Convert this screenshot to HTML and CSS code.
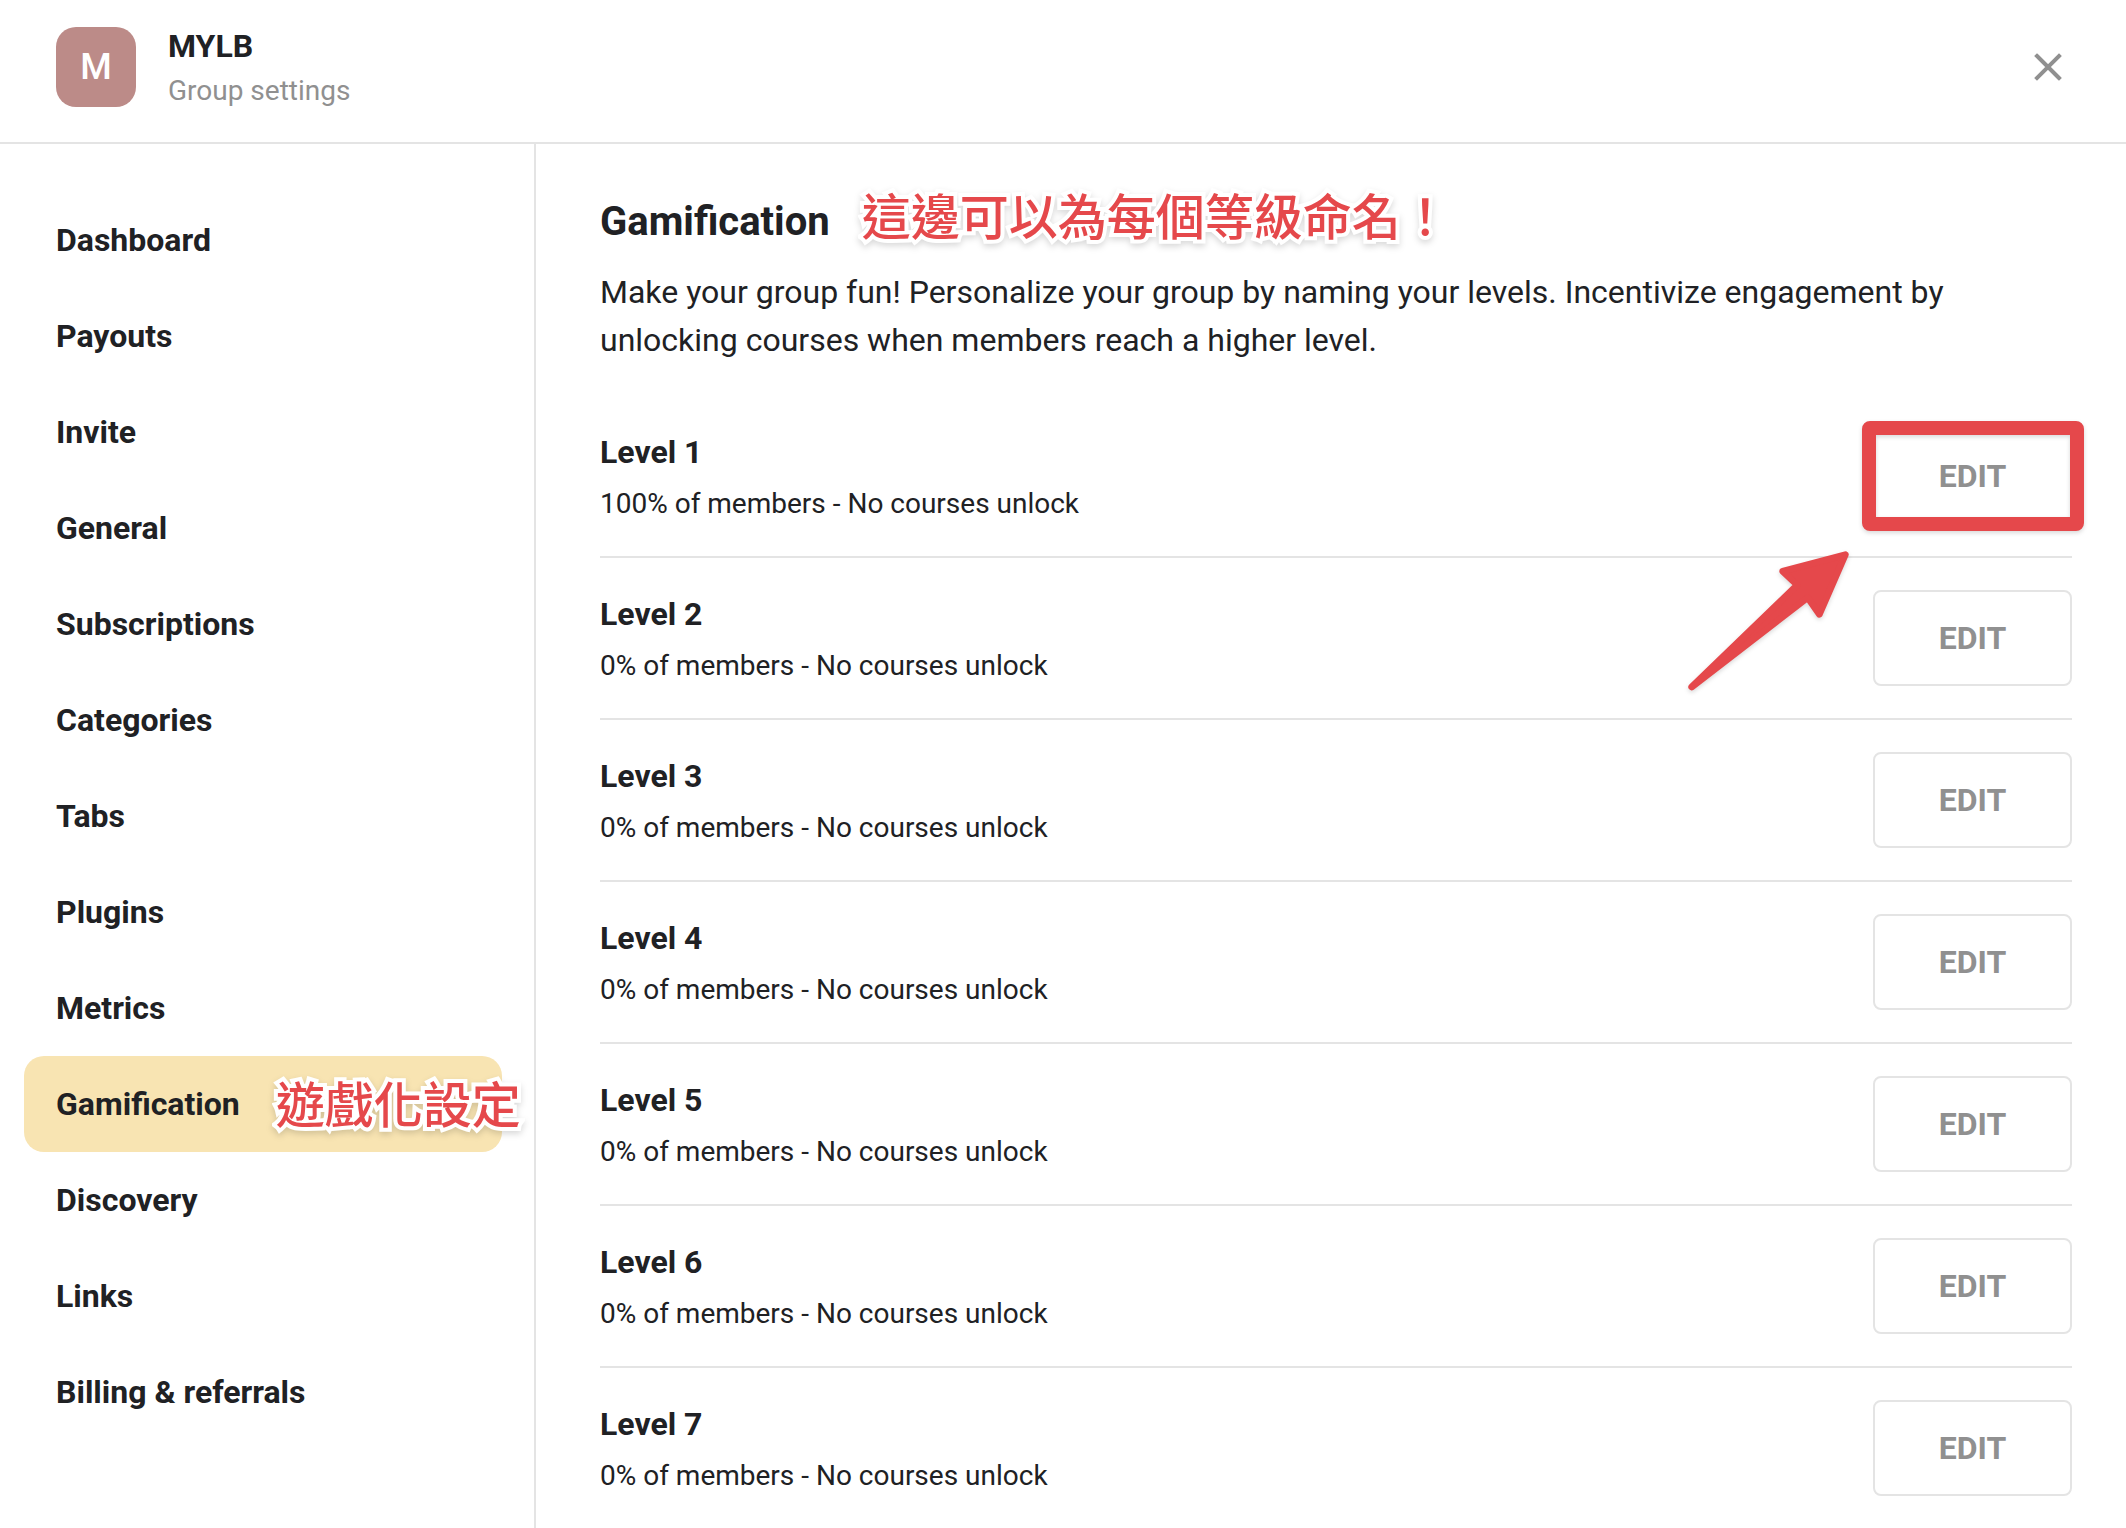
FILE: index.html
```html
<!DOCTYPE html>
<html lang="en">
    <head>
        <meta charset="utf-8">
        <title>Group settings</title>
        <link rel="stylesheet" href="styles.css">
    </head>
    <body>
        <header class="header">
            <div class="avatar">M</div>
            <div class="group">
                <div class="group_name">MYLB</div>
                <div class="group_sub">Group settings</div>
            </div>
            <button class="close" aria-label="Close">
                <svg viewBox="0 0 48 48" width="48" height="48">
                    <path d="M13 13L35 35M35 13L13 35"/>
                </svg>
            </button>
        </header>
        <div class="content">
            <nav class="sidebar">
                <a class="item" href="#">Dashboard</a>
                <a class="item" href="#">Payouts</a>
                <a class="item" href="#">Invite</a>
                <a class="item" href="#">General</a>
                <a class="item" href="#">Subscriptions</a>
                <a class="item" href="#">Categories</a>
                <a class="item" href="#">Tabs</a>
                <a class="item" href="#">Plugins</a>
                <a class="item" href="#">Metrics</a>
                <a class="item selected" href="#">Gamification <span class="note" lang="zh-Hant">遊戲化設定</span></a>
                <a class="item" href="#">Discovery</a>
                <a class="item" href="#">Links</a>
                <a class="item" href="#">Billing &amp; referrals</a>
            </nav>
            <main class="main">
                <div class="title">
                    <h1>Gamification</h1>
                    <span class="note" lang="zh-Hant">這邊可以為每個等級命名！</span>
                </div>
                <p class="intro">Make your group fun! Personalize your group by naming your levels. Incentivize engagement by unlocking courses when members reach a higher level.</p>
                <div class="levels">
                    <div class="level">
                        <div>
                            <h2>Level 1</h2>
                            <p>100% of members - No courses unlock</p>
                        </div>
                        <div class="marked">
                            <button class="edit">EDIT</button>
                            <div class="frame"></div>
                            <svg class="arrow" viewBox="141 504 501 435" width="167" height="145">
                                <path d="M616 524L428 574L472 615L155 921L503 653L538 703Z"/>
                            </svg>
                        </div>
                    </div>
                    <div class="level">
                        <div>
                            <h2>Level 2</h2>
                            <p>0% of members - No courses unlock</p>
                        </div>
                        <button class="edit">EDIT</button>
                    </div>
                    <div class="level">
                        <div>
                            <h2>Level 3</h2>
                            <p>0% of members - No courses unlock</p>
                        </div>
                        <button class="edit">EDIT</button>
                    </div>
                    <div class="level">
                        <div>
                            <h2>Level 4</h2>
                            <p>0% of members - No courses unlock</p>
                        </div>
                        <button class="edit">EDIT</button>
                    </div>
                    <div class="level">
                        <div>
                            <h2>Level 5</h2>
                            <p>0% of members - No courses unlock</p>
                        </div>
                        <button class="edit">EDIT</button>
                    </div>
                    <div class="level">
                        <div>
                            <h2>Level 6</h2>
                            <p>0% of members - No courses unlock</p>
                        </div>
                        <button class="edit">EDIT</button>
                    </div>
                    <div class="level">
                        <div>
                            <h2>Level 7</h2>
                            <p>0% of members - No courses unlock</p>
                        </div>
                        <button class="edit">EDIT</button>
                    </div>
                </div>
            </main>
        </div>
    </body>
</html>
```
FILE: styles.css
```css
* {
    box-sizing: border-box;
    margin: 0;
}

body {
    display: flex;
    flex-direction: column;
    min-height: 100vh;
    background-color: #fff;
    color: #202124;
    font-family: Roboto, "Noto Sans CJK TC", sans-serif;
    font-size: 32px;
    line-height: 48px;
}

/* header */
.header {
    display: flex;
    align-items: center;
    gap: 32px;
    padding: 22px 54px 30px 56px;
    border-bottom: 2px solid #e4e4e4;
}

.avatar {
    width: 80px;
    height: 80px;
    border-radius: 20px;
    background-color: #bc8b88;
    color: #fff;
    font-size: 36px;
    font-weight: 500;
    line-height: 80px;
    text-align: center;
}

.group {
    flex: 1;
}

.group_name {
    font-weight: 700;
}

.group_sub {
    color: #909090;
    font-size: 28px;
    line-height: 42px;
}

.close {
    display: flex;
    padding: 0;
    border: none;
    background: none;
    cursor: pointer;
}

.close path {
    stroke: #909090;
    stroke-width: 4;
    stroke-linecap: square;
}

.content {
    display: flex;
    flex: 1;
}

/* left menu */
.sidebar {
    flex: none;
    width: 536px;
    padding: 48px 32px 0 24px;
    border-right: 2px solid #e4e4e4;
}

.item {
    display: flex;
    align-items: center;
    gap: 36px;
    height: 96px;
    padding-left: 32px;
    border-radius: 20px;
    color: #202124;
    font-weight: 700;
    text-decoration: none;
    white-space: nowrap;
}

.item.selected {
    background-color: #f8e4b2;
}

/* level list */
.main {
    flex: 1;
    padding: 48px 54px 0 64px;
}

.title {
    display: flex;
    align-items: flex-start;
    gap: 32px;
    margin-bottom: 16px;
}

h1 {
    font-size: 40px;
    line-height: 60px;
}

.level {
    display: flex;
    align-items: center;
    justify-content: space-between;
    padding: 32px 0;
    border-bottom: 2px solid #e4e4e4;
}

.level:last-child {
    border-bottom: none;
}

.intro {
    margin-bottom: 32px;
}

h2 {
    margin-bottom: 8px;
    font-size: 32px;
}

.level p {
    font-size: 28px;
    line-height: 40px;
}

.edit {
    display: block;
    width: 199px;
    height: 96px;
    border: 2px solid #e4e4e4;
    border-radius: 8px;
    background-color: #fff;
    color: #909090;
    font-family: inherit;
    font-size: 32px;
    font-weight: 700;
    cursor: pointer;
}

/* red notes on top of the page */
.note {
    padding-bottom: 4px;
    color: #e5484b;
    font-family: "Noto Sans CJK TC", sans-serif;
    font-size: 49px;
    font-weight: 500;
    line-height: 44px;
    -webkit-text-stroke: 8px #fff;
    paint-order: stroke fill;
    stroke-linejoin: round;
    filter: drop-shadow(0 3px 3px rgba(0, 0, 0, 0.15));
}

.marked {
    position: relative;
}

.frame {
    position: absolute;
    inset: -7px -12px -7px -11px;
    border: 14px solid #e5484b;
    border-radius: 8px;
    filter: drop-shadow(0 2px 2px rgba(0, 0, 0, 0.15));
    pointer-events: none;
}

.arrow {
    position: absolute;
    top: 120px;
    right: 218px;
    overflow: visible;
    filter: drop-shadow(0 2px 2px rgba(0, 0, 0, 0.15));
}

.arrow path {
    fill: #e5484b;
    stroke: #e5484b;
    stroke-width: 20;
    stroke-linejoin: round;
}
```
